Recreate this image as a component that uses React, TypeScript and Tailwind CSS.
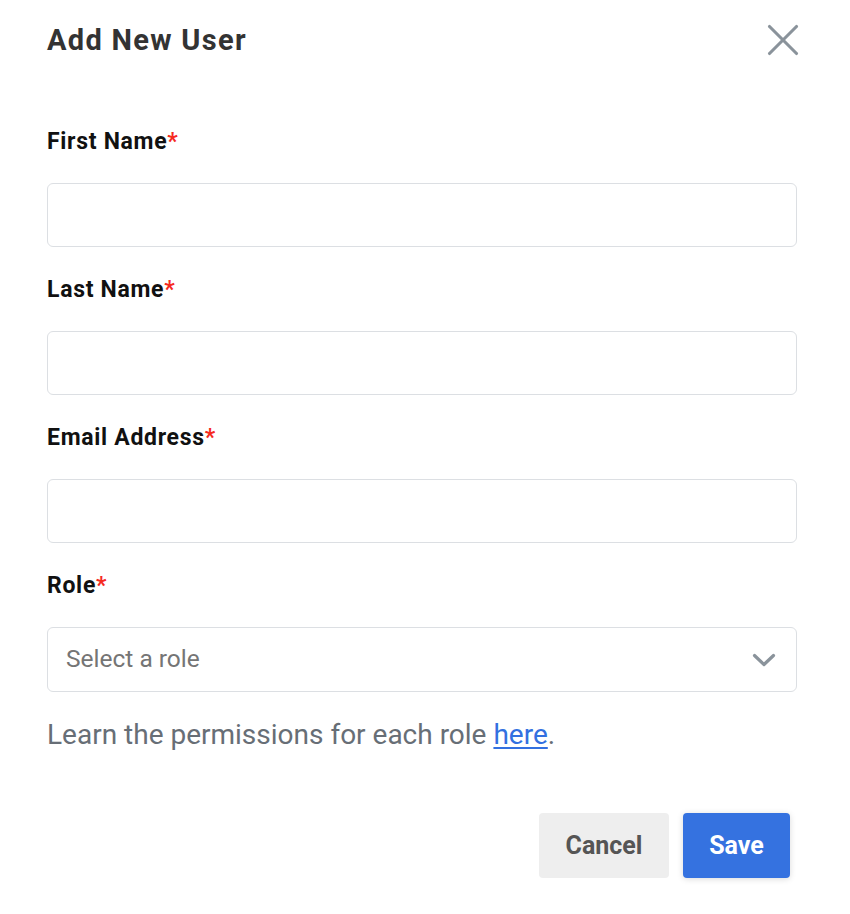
import { X } from "lucide-react";

function Label({ text }: { text: string }) {
  return (
    <label className="block text-[23px] leading-[28px] font-bold tracking-[0.7px] text-[#111]">
      {text}
      <span className="text-[#f52a1f]">*</span>
    </label>
  );
}

function Field({ label }: { label: string }) {
  return (
    <div className="pb-[29px]">
      <Label text={label} />
      <input
        type="text"
        className="mt-[27px] block h-[64px] w-full rounded-[6px] border border-[#dcdfe3] bg-white px-[18px] text-[22px] outline-none"
      />
    </div>
  );
}

export default function App() {
  return (
    <div className="min-h-screen bg-white font-['Roboto','Liberation_Sans',sans-serif]">
      <div className="ml-[47px] w-[750px]">
        <header className="flex h-[80px] items-center justify-between">
          <h1 className="text-[29px] font-bold leading-[32px] tracking-[1.3px] text-[#333]">Add New User</h1>
          <button className="-mr-[13px] text-[#8a939b]">
            <X size={54} strokeWidth={1.4} />
          </button>
        </header>

        <form className="pt-[48px]">
          <Field label="First Name" />
          <Field label="Last Name" />
          <Field label="Email Address" />

          <div>
            <Label text="Role" />
            <div className="mt-[27px] flex h-[65px] w-full items-center justify-between rounded-[6px] border border-[#dcdfe3] bg-white pl-[18px] pr-[20px]">
              <span className="text-[24.5px] text-[#757575]">Select a role</span>
              <svg width="24" height="14" viewBox="0 0 24 14" fill="none" className="text-[#8a939b]">
                <polyline
                  points="2.5,2.5 12,11.5 21.5,2.5"
                  stroke="currentColor"
                  strokeWidth="3.2"
                  strokeLinecap="round"
                  strokeLinejoin="round"
                />
              </svg>
            </div>
          </div>

          <p className="mt-[27px] text-[28px] leading-[32px] text-[#676e76]">
            Learn the permissions for each role{" "}
            <a href="#" className="text-[#3370e0] underline underline-offset-[3px]">
              here
            </a>
            .
          </p>

          <div className="mt-[62px] flex justify-end gap-[14px] pr-[7px]">
            <button
              type="button"
              className="h-[65px] w-[130px] rounded-[4px] bg-[#eeeeee] text-[25px] font-bold text-[#555]"
            >
              Cancel
            </button>
            <button
              type="button"
              className="h-[65px] w-[107px] rounded-[4px] bg-[#3572e0] text-[25px] font-bold text-white shadow-[0_1px_6px_rgba(0,0,0,0.15)]"
            >
              Save
            </button>
          </div>
        </form>
      </div>
    </div>
  );
}
